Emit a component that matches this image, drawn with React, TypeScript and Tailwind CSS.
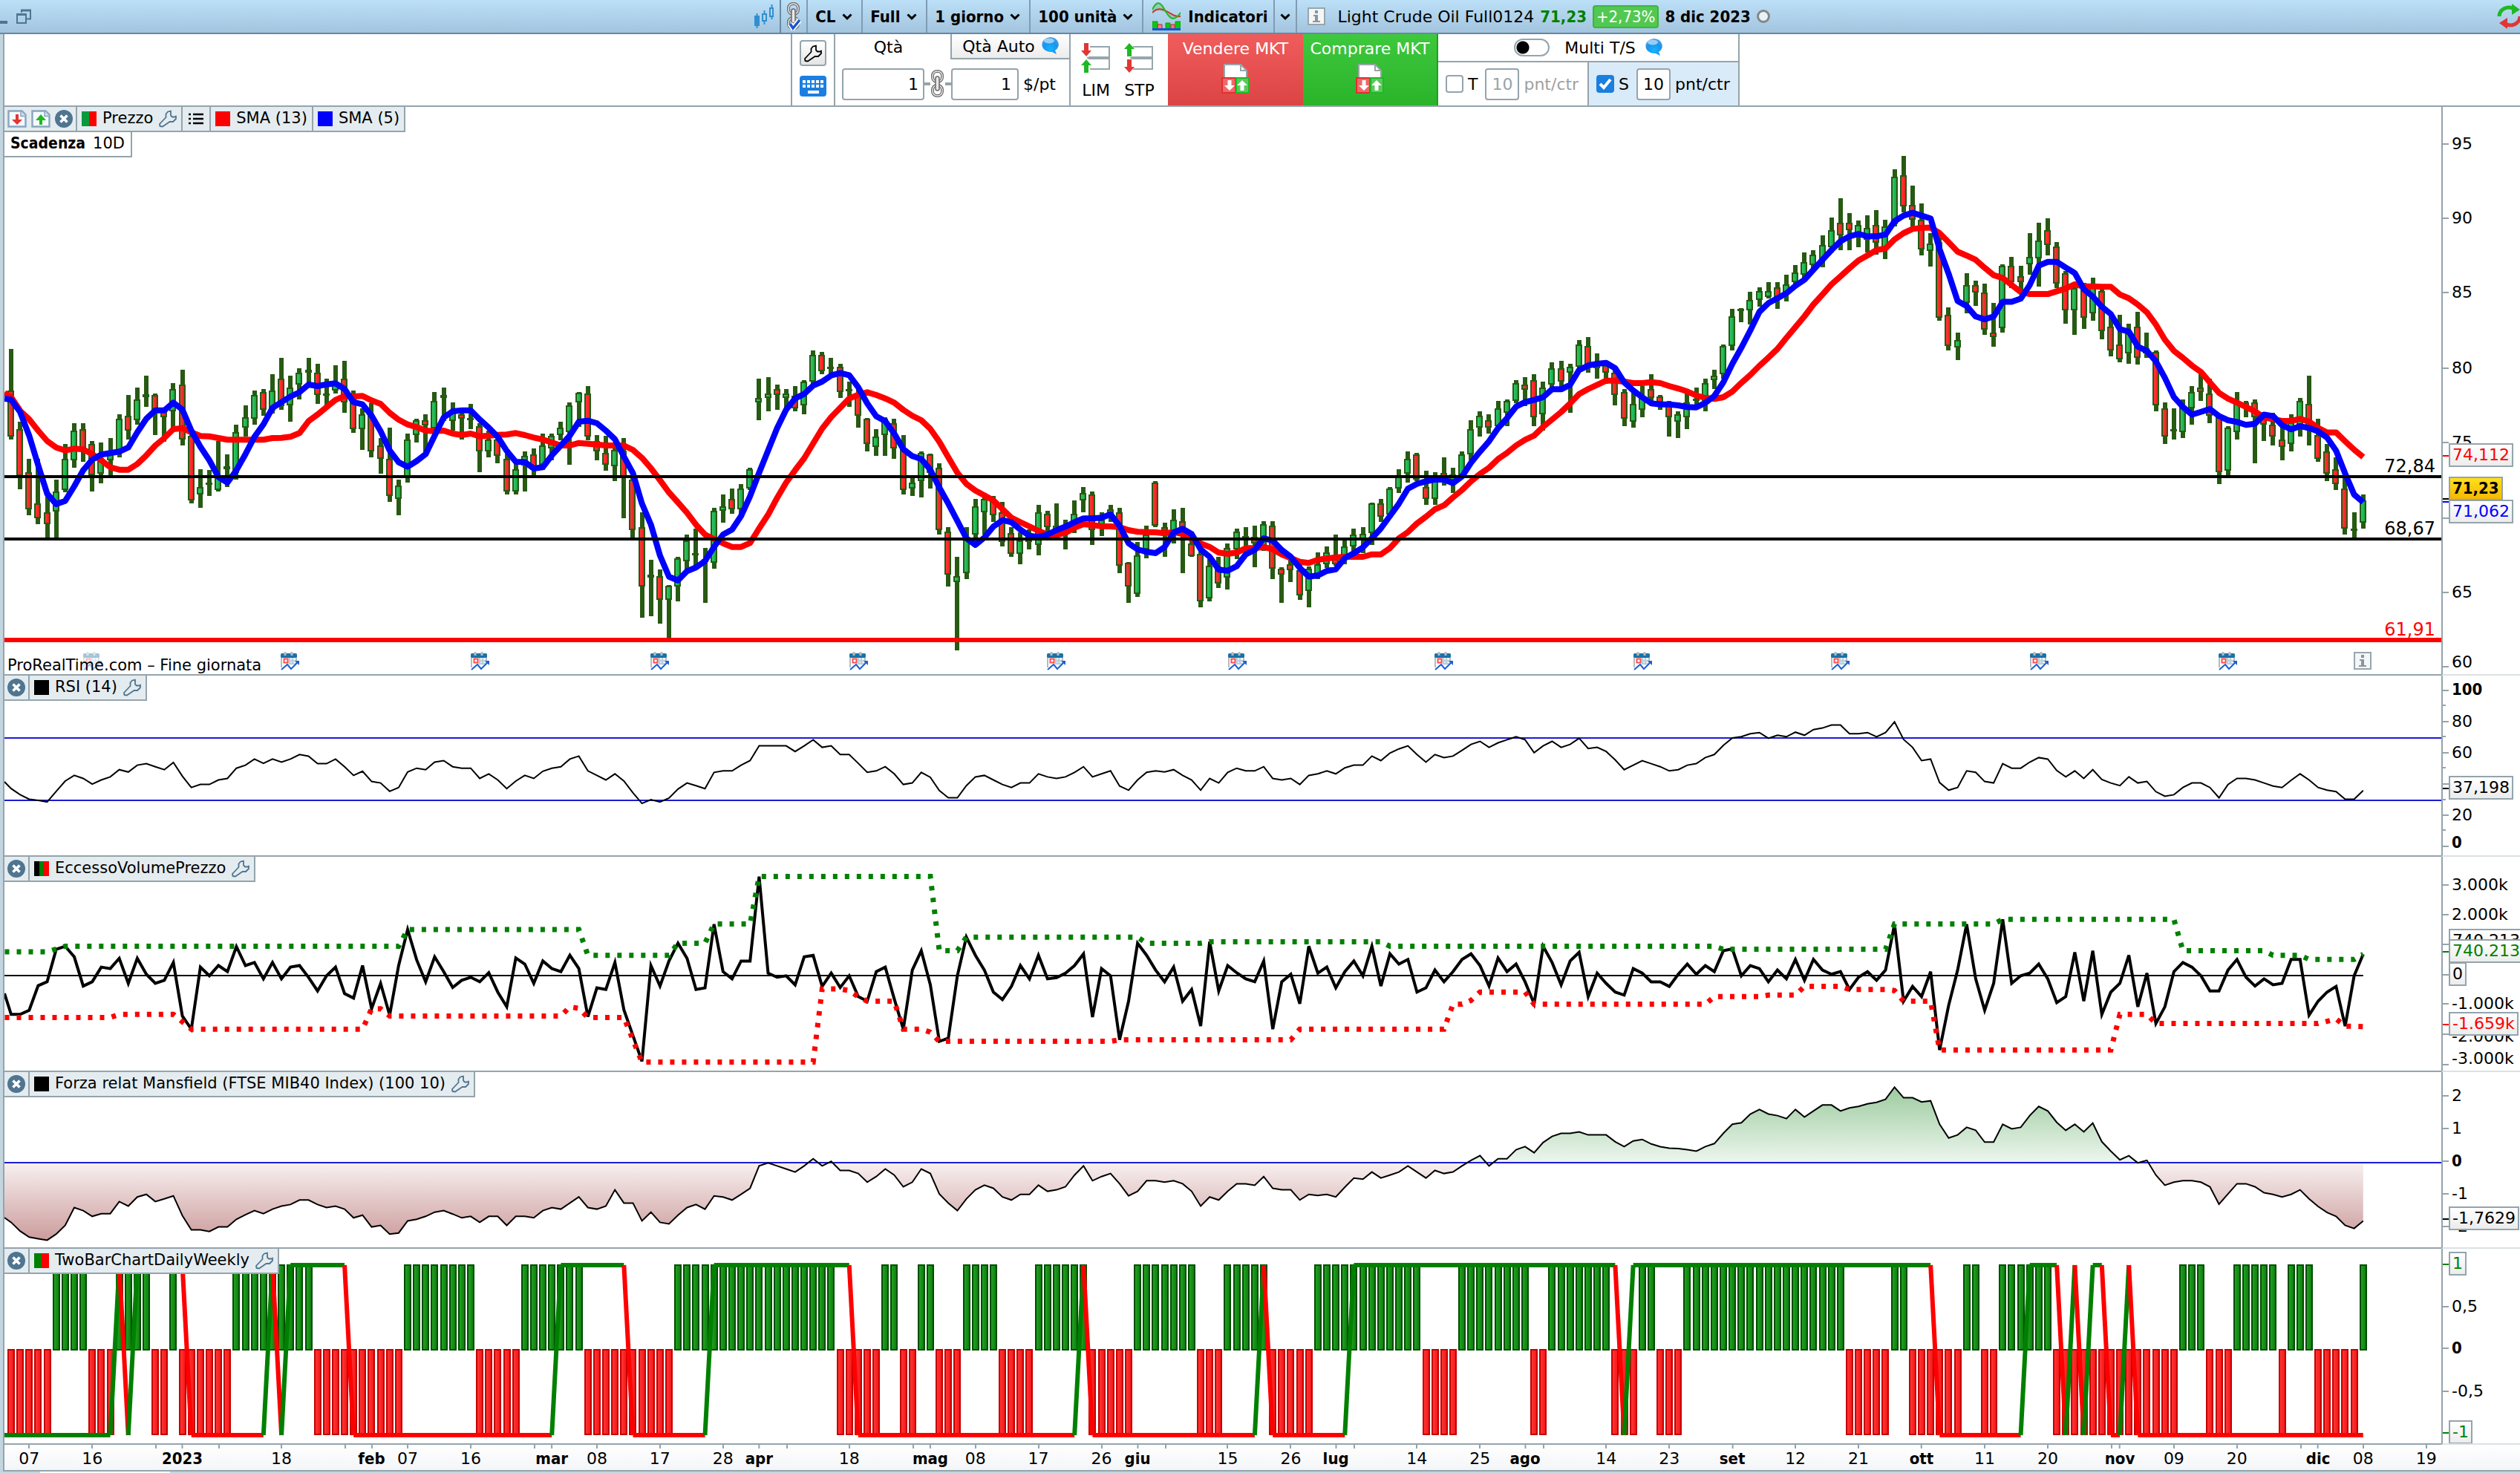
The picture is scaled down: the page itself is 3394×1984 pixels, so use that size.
import type { ReactNode } from "react";

type Mark = { at: number; text?: string; bold?: boolean; tick?: number | null; minor?: boolean };
type Tag = { at: number; text: string; className: string; tick?: string; tickAt?: number };

const PLOT_WIDTH = 3282;
const FIRST_BAR = 9;
const BAR_STEP = 12.137;

const barX = (i: number) => FIRST_BAR + BAR_STEP * i;
const pct = (value: number, total: number) => `${(value / total) * 100}%`;
const nums = (s: string) => s.trim().split(/[\s,]+/).map(Number);
const block = (base: number, step: number, s: string) => nums(s).map((n) => base + n / step);
const line = (ys: number[], first?: number) =>
  (first === undefined ? "" : `0,${first.toFixed(1)} `) +
  ys.map((y, i) => `${barX(i).toFixed(1)},${y.toFixed(1)}`).join(" ");

// Sessions: direction + high,top,bottom,low. Every block has its own base and step.
const candleBlocks: [number, number, string][] = [
  [276, 3, `
    r150,318,505,515 r445,474,664,718 r595,648,798,822 r595,773,833,857 r740,810,857,912 g678,726,808,912
    g535,594,720,730 g450,480,600,630 r450,474,560,605 r522,534,660,725 g528,590,655,694 g510,560,600,660
    g414,432,560,587 r336,420,480,515 g306,354,438,455 g258,333,345,383 r330,336,395,497 r390,400,425,525
    g288,312,402,470 r234,294,516,539 r480,500,762,773 g636,708,738,791 r640,690,700,743 g522,670,720,725
    g576,624,636,707 g456,486,650,677 g378,426,467,505 g318,336,432,455 r312,324,396,419 g252,318,400,412
    r186,270,380,395 g258,306,377,443 g228,246,295,353 r186,234,245,290 r210,246,335,371 g270,330,336,383
    g216,285,318,330 r198,270,366,407 r318,350,474,490 g390,413,474,557 r370,410,564,587 r510,540,595,653
    r468,594,744,767 g678,702,756,822 g492,516,672,689 g432,438,498,527 r414,438,460,570 g324,360,470,480
    g306,337,348,440 g366,400,440,480 r400,414,432,515 g372,430,438,473 r450,462,564,647 g480,516,564,587
    r500,516,582,611 r570,594,726,738 g600,636,726,738 g564,582,620,725 r552,576,640,665 g492,540,618,640
    g492,500,552,600 g444,468,498,520 g366,378,486,617 g324,328,366,465 r300,330,504,520 r498,522,564,600
    r500,570,618,641 g540,558,625,683 r510,560,672,833 r640,678,882,912 r810,870,1110,1235 g1002,1062,1075,1229
    r1040,1068,1164,1259 g1104,1108,1164,1317 g990,996,1110,1169 g900,924,1008,1050 g877,975,985,1040
    g954,1000,1010,1175 g792,804,1014,1037 g738,786,804,851 r714,756,798,815 g696,714,798,815 g630,636,714,720
    g270,348,366,437 g264,330,348,402 r294,312,336,395 g312,330,348,395 r300,340,390,402 g276,282,378,413
    g156,174,282,300 r162,174,240,251 g186,222,228,250 r210,222,324,347 g282,312,318,383 r315,330,420,467
    r430,432,534,563 g474,504,546,581 g426,432,498,581 r432,450,552,593 r498,550,720,738 g660,690,714,743
    g564,570,684,749 r573,576,650,713 r612,630,882,900 r870,888,1062,1109 g990,1068,1092,1367 g870,910,1056,1079
    g756,786,900,930 g740,756,810,900 r744,760,822,850 r768,810,930,947 r870,894,978,989 g890,924,978,1019
    r880,900,930,959 g780,810,942,983 r804,816,870,890 r774,864,880,910 g840,870,880,959 g762,816,860,893
    g708,732,762,809 r726,738,882,941 g810,840,860,905 r780,798,815,850 r792,810,1026,1055 r1010,1014,1110,1175
    g930,984,1140,1151 g864,900,960,995 r684,690,864,870 r852,870,885,989 g798,840,885,935 r792,846,880,1055
    r888,936,986,989 r960,978,1170,1193 g1000,1026,1158,1169 r990,1030,1098,1115 g936,954,1074,1121
    g876,888,960,1000 r870,905,915,960 r864,910,935,1031 g846,858,960,965`],
  [256, 3, `
    r906,924,1098,1139 r1092,1098,1122,1235 r1060,1080,1104,1151 r1080,1104,1206,1223 g1090,1098,1188,1253
    g1032,1080,1130,1139 g1008,1032,1080,1095 r960,1060,1080,1085 g985,1008,1060,1079 g936,960,1008,1030
    g930,957,985,1035 g832,834,955,1001 r816,834,888,910 g768,774,880,893 g696,720,774,791 g624,654,714,749
    r630,636,738,745 r702,768,816,839 g708,740,816,839 r648,712,730,761 g690,718,740,791 g624,636,720,730
    g498,534,636,660 g462,480,528,563 r474,498,528,551 g420,450,522,530 g414,420,468,521 g336,348,420,430
    r324,354,374,440 r312,336,486,521 g342,366,474,539 g264,288,354,370 r258,288,342,370 g270,282,306,467
    g174,192,282,300 r162,198,275,305 g228,270,288,329 r258,275,306,350 r295,306,396,437 r372,384,492,521
    g380,432,504,527 g360,400,456,486 r312,372,408,430 r396,402,425,455 r420,430,486,563 g462,474,504,570
    g390,426,486,533 g366,410,420,450 g330,348,420,461 g294,318,336,371 g192,198,312,330 g48,78,198,215
    g45,48,54,101 g-20,12,54,110 g-40,-24,12,40 g-60,-25,0,5 r-60,-40,0,47 g-90,-50,-10,17 g-130,-100,-60,-40
    g-180,-140,-90,-70 g-190,-170,-130,-110 g-250,-210,-150,-120 g-320,-270,-200,-180 r-400,-300,-250,-190
    r-340,-300,-270,-190 g-310,-290,-250,-200 g-330,-280,-230,-180 r-350,-290,-220,-170`],
  [36, 2.119, `
    g245,265,330,358 g102,123,258,265 r64,119,208,224 r148,203,246,264 r199,246,331,347 g285,313,335,380
    r295,310,526,533 r496,517,606,618 g568,589,610,647 g398,432,483,512 r420,432,454,491 r428,453,560,575
    r483,568,581,609 g373,377,555,567 r352,377,423,440 r377,407,424,445 g284,352,373,402 g254,305,356,436
    r242,275,318,347 r309,322,428,440 r393,398,504,542 g430,440,504,575 r425,440,526,558 g411,428,513,533
    r440,449,564,588 r510,551,619,635 r517,602,644,652 g542,570,627,656 r509,551,640,660 g568,612,628,640
    r618,623,776,792 r767,784,864,886 g784,843,849,873 g759,780,852,868 g720,738,784,830 r685,725,738,763
    r700,742,805,826 r800,810,966,1000 g835,839,962,975 g737,770,852,873 g763,767,780,809 r758,767,810,941
    r795,805,831,877 r797,830,865,890 r840,873,894,932 g800,825,886,907 g754,763,830,864 r690,771,848,890
    r814,860,928,937 r886,907,971,992 r924,958,1000,1017 r980,1013,1127,1144 g1081,1127,1132,1153
    g1030,1047,1110,1127`],
];

const candles = candleBlocks.flatMap(([base, step, text]) =>
  text.trim().split(/\s+/).map((c) => {
    const [high, top, bottom, low] = block(base, step, c.slice(1)).map(Math.round);
    return { up: c[0] === "g", high, top, bottom, low };
  }),
);

const sma13 = [
  ...block(276, 3, `345 400 434 480 522 548 560 553 556 575 600 628 638 638 615 580 540 510 474 470 487 502 503 510
    517 517 517 517 517 510 509 505 490 442 415 385 356 340 342 340 358 372 408 436 455 466 480 482 480 492 498 492
    503 500 497 496 490 498 508 516 528 540 540 530 533 536 540 540 540 558 590 632 680 730 770 812 860 900 918 935
    950 950 934 875 820 752 690 640 592 532 472 425 388 350 335 325 336 350 367 396 420 438 473 525 588 650 695 722
    742 762 797 832 850 867 885 900 902 893 872 858 862 866 867 870 882 889 890 891 895 890 898 918 936 950 973 978
    973 955 955 950`),
  ...block(256, 3, `1020 1040 1055 1070 1075 1062 1057 1052 1050 1050 1050 1040 1040 1015 975 950 915 888 858 842
    810 780 745 715 690 655 630 600 577 560 525 495 465 430 392 372 355 338 338 342 348 348 344 348 360 370 382 398
    408 412 405 382 347 315 278 245 210 165 122 78 30 -10 -51 -83 -116 -148 -168 -190`),
  ...block(36, 2.119, `328 302 284 272 269 268 284 310 337 348 360 383 404 412 432 452 458 458 458 450 442 430 436
    436 437 437 459 470 488 510 545 588 620 640 662 680 710 740 756 768 780 793 810 815 820 820 814 822 840 853 853
    878 902 923`),
];

const sma5 = [
  ...block(276, 3, `355 405 500 620 735 777 764 705 640 597 577 571 565 548 487 432 398 398 367 395 480 545 600 668
    690 640 575 505 455 388 365 342 325 294 300 293 289 312 365 374 420 482 560 608 626 603 575 500 427 402 398 398
    435 468 505 562 606 607 633 628 580 540 500 444 440 450 480 515 585 652 775 860 985 1070 1085 1048 1033 1007 950
    900 880 825 745 650 560 470 395 350 332 298 282 257 247 256 305 370 422 442 492 555 583 595 638 710 775 845 915
    942 912 868 842 850 880 905 910 900 882 868 850 835 835 832 818 865 935 960 970 975 950 892 877 898 960 990 1042
    1046 1028 980 962 915`),
  ...block(256, 3, `985 1022 1050 1095 1130 1125 1107 1100 1055 1035 1012 975 935 885 835 775 755 745 738 738 752
    725 670 625 583 530 490 443 425 416 405 373 373 355 295 277 270 266 288 345 378 405 430 434 434 438 445 446 428
    400 345 270 205 135 60 25 5 -15 -45 -70 -110 -150 -190 -225 -245 -255 -245 -245`),
  ...block(36, 2.119, `288 250 234 226 234 242 330 400 478 492 522 530 522 480 480 471 432 377 366 366 382 398 444
    465 494 515 558 565 608 620 650 697 752 780 802 794 786 806 818 823 831 828 802 806 832 844 835 840 850 868 905
    970 1030 1052`),
];

const rsi = block(-10, 1.96, `318 334 346 349 353 325 298 283 291 306 295 287 268 274 256 252 260 268 249 285 315 307
  307 295 291 264 256 240 251 240 248 240 228 232 252 252 240 260 283 272 299 303 325 315 274 264 268 248 244 260
  264 264 291 279 295 318 298 283 291 272 264 260 240 232 271 283 295 279 298 329 357 347 353 343 319 303 310 318
  275 271 271 256 244 205 205 205 205 220 205 189 209 205 228 228 251 275 271 260 279 307 303 275 288 323 342 342
  310 287 283 295 307 315 303 303 279 287 291 287 275 260 287 279 271 311 322 295 275 271 274 268 283 295 322 291
  303 275 264 271 271 260 291 295 291 307 283 279 271 279 263 256 256 232 244 224 213 205 228 248 228 236 232 217
  201 193 209 197 189 181 189 223 205 193 209 201 185 212 209 220 242 268 256 244 252 260 271 268 256 252 236 228
  204 184 181 173 170 185 177 181 169 177 162 158 150 150 173 173 170 181 170 142 188 209 244 240 302 322 315 271
  275 299 303 252 264 264 248 236 240 270 287 271 291 268 294 303 310 287 303 299 326 338 334 315 303 303 315 342
  307 291 291 295 303 311 315 296 279 295 315 322 326 346 346 323`);

const excess = block(-254, 1.96, `914 914 903 838 828 742 734 762 839 828 789 793 766 832 766 808 832 824 777 918 953
  789 812 785 801 735 785 777 820 777 820 789 785 816 852 812 789 859 871 785 899 832 916 785 690 770 828 762 801
  843 824 816 828 804 855 894 765 781 832 773 793 801 758 793 920 844 848 777 902 970 1038 785 839 773 726 766 848
  844 676 801 820 773 773 550 805 816 812 836 762 758 840 805 843 812 867 879 801 789 873 953 797 746 836 985 977
  812 710 758 797 855 875 840 785 820 758 820 817 805 785 754 921 793 812 981 879 726 758 797 828 789 879 848 945
  722 852 785 804 820 828 773 953 828 808 886 734 805 789 844 801 773 812 734 839 754 781 769 855 844 797 828 801
  769 754 785 839 765 801 781 828 886 734 777 836 773 750 867 805 832 855 863 793 805 828 828 840 808 781 808 785
  801 746 741 812 785 793 828 797 820 769 824 769 797 808 801 848 816 801 824 797 676 879 840 867 801 1008 890 797
  676 820 903 832 663 832 812 805 781 820 883 867 750 879 746 914 855 832 758 894 805 938 894 801 777 789 812 852
  852 797 769 816 839 820 836 832 769 769 916 879 855 840 945 812 755`);

const mansfield = block(-544, 1.96, `1463 1486 1502 1506 1510 1494 1471 1424 1432 1447 1440 1440 1408 1420 1396 1389
  1408 1401 1393 1445 1483 1483 1487 1475 1475 1455 1443 1432 1440 1428 1420 1416 1404 1404 1416 1424 1420 1428
  1451 1444 1475 1471 1494 1491 1459 1455 1447 1436 1432 1441 1451 1447 1463 1447 1447 1471 1447 1447 1451 1432
  1424 1428 1412 1396 1424 1428 1420 1377 1412 1412 1459 1436 1463 1467 1444 1424 1416 1428 1393 1396 1404 1389
  1373 1314 1306 1314 1322 1330 1314 1295 1314 1302 1326 1326 1334 1357 1342 1322 1338 1369 1357 1322 1334 1388
  1412 1432 1401 1377 1365 1373 1396 1404 1389 1389 1365 1381 1377 1369 1338 1314 1353 1342 1334 1361 1393 1381
  1353 1353 1357 1353 1361 1381 1420 1396 1404 1381 1361 1361 1365 1342 1373 1377 1377 1404 1389 1392 1389 1396
  1370 1346 1349 1330 1346 1338 1330 1314 1330 1346 1326 1334 1330 1314 1299 1287 1314 1295 1295 1271 1263 1279
  1252 1236 1228 1228 1224 1232 1232 1232 1250 1263 1248 1244 1256 1263 1267 1268 1271 1275 1263 1255 1228 1204
  1200 1177 1165 1177 1181 1189 1165 1185 1169 1153 1153 1169 1161 1157 1150 1146 1138 1106 1134 1134 1145 1142
  1204 1240 1232 1212 1220 1251 1251 1204 1216 1212 1181 1157 1169 1199 1220 1204 1224 1201 1250 1275 1298 1287
  1306 1299 1338 1365 1357 1353 1353 1357 1369 1415 1388 1361 1361 1369 1385 1389 1396 1389 1377 1401 1421 1437
  1447 1471 1479 1459`);

// index:level pairs of the two dotted channel lines
const steps = (s: string) =>
  s.trim().split(/\s+/).map((p) => {
    const [i, y] = p.split(":").map(Number);
    return `${barX(i).toFixed(1)},${(y / 1.96 - 254).toFixed(1)}`;
  }).join(" ");

const upperChannel = steps(`-0.7:749 4:749 6:734 43:734 44:690 63:690 64:758 73:758 74:726 77:726 78:675 82:675 83:550
  102:550 103:746 105:746 106:710 125:710 126:726 132:726 133:722 152:722 153:734 189:734 190:742 208:742 209:675
  220:675 221:663 240:663 241:746 250:746 251:758 254:758 255:769 260:769 261:755`);
const lowerChannel = steps(`-0.7:922 11:922 12:914 18:914 20:953 39:953 40:899 41:899 42:918 61:918 62:894 63:898
  64:922 68:922 70:1040 89:1040 90:847 92:847 93:851 94:867 95:879 98:879 99:953 101:953 102:961 103:985 122:985
  123:981 142:981 143:953 159:953 160:887 161:887 162:877 163:855 168:855 169:887 188:887 189:867 194:867 195:863
  198:863 199:840 203:840 204:848 208:848 209:851 210:879 213:879 214:1008 233:1008 234:914 237:914 238:938 256:938
  258:926 259:945 261:946`);

// run lengths of the daily bars, starting with a negative run
const dailyRuns = nums(`5 4 3 4 2 1 6 9 10 8 5 7 10 18 5 2 2 2 3 4 4 6 5 7 3 5 5 12 4 8 2 7 3 2 3 18 5 2 6 2 2 6 14 3
  3 5 1 3 5 1`);
const weeklyTurns = nums(`11 12 13 14 19 20 28 29 30 31 37 38 60 61 68 69 77 78 93 94 118 119 120 138 139 140 148 149
  178 179 180 213 214 223 224 227 228 229 230 231 232 233 234 235 236 261`);
const weeklyUp = new Set([12, 14, 19, 29, 31, 37, 61, 68, 78, 93, 119, 139, 149, 178, 180, 213, 224, 227, 229, 231, 232, 235]);

const dailyBars = (() => {
  const out: boolean[] = [];
  dailyRuns.forEach((n, k) => {
    for (let j = 0; j < n; j++) out.push(k % 2 === 1);
  });
  return out;
})();

const weeklySegments = (() => {
  const level = (i: number) => (weeklyUp.has(i) ? 22 : 251);
  const out = [{ x1: 0, y1: 251, x2: barX(11), y2: 251, up: true }];
  for (let k = 1; k < weeklyTurns.length; k++) {
    const a = weeklyTurns[k - 1];
    const b = weeklyTurns[k];
    out.push({ x1: barX(a), y1: level(a), x2: barX(b), y2: level(b), up: weeklyUp.has(b) });
  }
  return out;
})();

const eventMarks = [385, 641, 883, 1151, 1417, 1661, 1939, 2207, 2473, 2741, 2995];

const dates: [number, string, boolean?][] = [
  [2, "07"], [9, "16"], [19, "2023", true], [30, "18"], [40, "feb", true], [44, "07"], [51, "16"], [60, "mar", true],
  [65, "08"], [72, "17"], [79, "28"], [83, "apr", true], [93, "18"], [102, "mag", true], [107, "08"], [114, "17"],
  [121, "26"], [125, "giu", true], [135, "15"], [142, "26"], [147, "lug", true], [156, "14"], [163, "25"],
  [168, "ago", true], [177, "14"], [184, "23"], [191, "set", true], [198, "12"], [205, "21"], [212, "ott", true],
  [219, "11"], [226, "20"], [234, "nov", true], [240, "09"], [247, "20"], [256, "dic", true], [261, "08"], [268, "19"],
];
const extraTicks = [16, 23, 37, 58, 86, 100, 128, 149, 170, 233, 254];

const boldFont = "font-['DejaVu_Sans_Condensed','DejaVu_Sans',sans-serif] font-bold";
const tagBox = "border-[#94a4ac] bg-linear-to-b from-white to-[#ececec]";

/* ---------- icons ---------- */

function Wrench({ className = "size-6", stroke = "#4f7590" }: { className?: string; stroke?: string }) {
  return (
    <svg viewBox="0 0 24 24" className={className} fill="none" stroke={stroke} strokeWidth="1.8" strokeLinejoin="round">
      <path d="M12 2.500 16 1.500v6l2 2h4l1-1v3.500l-4 4h-4.500L5 22.500 1.500 22 1 19l8.500-9V5.500z" />
    </svg>
  );
}

function Chevron() {
  return (
    <svg viewBox="0 0 14 9" className="pointer-events-none h-[9px] w-3.5 shrink-0" fill="none" stroke="#000" strokeWidth="3">
      <path d="M1.500 1.500 7 6.800l5.500-5.300" />
    </svg>
  );
}

function CloseDot() {
  return (
    <svg viewBox="0 0 24 24" className="size-6">
      <circle cx="12" cy="12" r="12" fill="#4f7590" />
      <path d="M7.500 7.500l9 9M16.500 7.500l-9 9" stroke="#fff" strokeWidth="3.600" />
    </svg>
  );
}

function PageArrow({ up }: { up?: boolean }) {
  return (
    <svg viewBox="0 0 26 24" className="h-6 w-[26px]">
      <path d="M1.500 1.500h18l5 5v16h-23z" fill="#f7fafc" stroke="#8ba6c0" strokeWidth="2.500" />
      <path d="M18 1.500v7h7" fill="#cfdfea" stroke="#8ba6c0" strokeWidth="1.500" />
      {up ? (
        <path d="M13 6l7 8h-5v6h-4v-6H6z" fill="#1fb824" />
      ) : (
        <path d="M13 20l7-7h-5V6h-4v7H6z" fill="#e23535" />
      )}
    </svg>
  );
}

function Chain({ checked }: { checked?: boolean }) {
  return (
    <svg viewBox="0 0 20 38" className="h-[38px] w-5" fill="none">
      <rect x="3" y="2" width="13" height="14" rx="6" stroke="#6a6a6a" strokeWidth="4" />
      <rect x="3" y="2" width="13" height="14" rx="6" stroke="#e8e8e8" strokeWidth="1.500" />
      <rect x="3" y="21" width="13" height="14" rx="6" stroke="#6a6a6a" strokeWidth="4" />
      <rect x="3" y="21" width="13" height="14" rx="6" stroke="#e8e8e8" strokeWidth="1.500" />
      <rect x="7" y="9" width="5" height="19" rx="2.500" fill="#e8e8e8" stroke="#6a6a6a" strokeWidth="1.500" />
      {checked && (
        <>
          <path d="M5 29l4 6 9-11" stroke="#fff" strokeWidth="7" />
          <path d="M5 29l4 6 9-11" stroke="#1a55d0" strokeWidth="3.500" />
        </>
      )}
    </svg>
  );
}

function Balloon() {
  return (
    <svg viewBox="0 0 24 24" className="size-6">
      <defs>
        <radialGradient id="balloon" cx="0.5" cy="0.7" r="0.7">
          <stop offset="0" stopColor="#14b4ff" />
          <stop offset="0.6" stopColor="#1a94ee" />
          <stop offset="1" stopColor="#4f9fe0" />
        </radialGradient>
      </defs>
      <path d="M12 0a12 10 0 0 1 7 18l2 5-6-3A12 10 0 1 1 12 0z" fill="url(#balloon)" />
      <ellipse cx="11" cy="5" rx="7" ry="3.500" fill="#c5e6fb" opacity=".7" />
    </svg>
  );
}

function OrderSheet() {
  return (
    <svg viewBox="0 0 38 40" className="h-10 w-[38px]">
      <path d="M4 1h22l8 8v11H4z" fill="#fff" stroke="#9aa5a8" strokeWidth="2" />
      <path d="M26 1v8h8" fill="none" stroke="#9aa5a8" strokeWidth="2" />
      <rect x="1" y="19" width="18" height="20" fill="#ec6a6a" stroke="#e03030" strokeWidth="2" />
      <rect x="20" y="19" width="17" height="20" fill="#5cc85c" stroke="#1fb824" strokeWidth="2" />
      <path d="M11 36l-7-7h4.500v-7h5v7H18zM28 22l7 7h-4.500v7h-5v-7H21z" fill="#fff" />
    </svg>
  );
}

function LimitIcon({ stop }: { stop?: boolean }) {
  const top = stop ? "#1fb824" : "#e23535";
  const bottom = stop ? "#e23535" : "#1fb824";
  return (
    <svg viewBox="0 0 40 40" className="size-10">
      <path d="M12 5h26v30H12M8 20h30" fill="none" stroke="#97a6ac" strokeWidth="2" />
      <path d="M10 20h28" stroke="#97a6ac" strokeWidth="4" />
      {stop ? (
        <path d="M7 0l7 8H10v10H4V8H0z" fill={top} />
      ) : (
        <path d="M7 18l7-8H10V0H4v10H0z" fill={top} />
      )}
      {stop ? (
        <path d="M7 40l7-8H10V22H4v10H0z" fill={bottom} />
      ) : (
        <path d="M7 22l7 8H10v10H4V30H0z" fill={bottom} />
      )}
    </svg>
  );
}

function IndicatorIcon() {
  return (
    <svg viewBox="0 0 38 38" className="h-[38px] w-[38px]">
      <path d="M0 12C4-1 10-2 16 9s12 18 22 4v6c-8 1-14-3-20-5S6 8 0 16z" fill="#7fc79a" opacity=".7" />
      <path d="M0 14c6-6 12-6 19-2s12 8 19 7" fill="none" stroke="#d83030" strokeWidth="2" />
      <path d="M0 10C5-1 10-2 16 9s12 20 22 5" fill="none" stroke="#1fb824" strokeWidth="2" />
      <path d="M0 26h7v10H0zM18 28h6v8h-6zM31 26h7v10h-7z" fill="#0cc80c" stroke="#0a9a0a" />
      <path d="M7 30h6v6H7zM25 30h5v6h-5z" fill="#ff7a7a" stroke="#c02020" />
      <path d="M0 36.500h38" stroke="#1155d8" strokeWidth="3" />
    </svg>
  );
}

function InfoIcon() {
  return (
    <svg viewBox="0 0 24 24" className="size-6">
      <rect x="1" y="1" width="22" height="22" fill="#f4f6f7" stroke="#97a6ac" strokeWidth="2" />
      <rect x="10" y="4" width="4" height="4" fill="#87969c" />
      <path d="M8 10h6v8h3v2H7v-2h3v-6H8z" fill="#87969c" />
    </svg>
  );
}

function CalendarMark() {
  return (
    <svg viewBox="0 0 26 25" className="h-[25px] w-[26px]">
      <rect x="0" y="2" width="22" height="6" rx="1.500" fill="#1a72a8" />
      <path d="M1 8v13M21 8v8" stroke="#b4bcc2" strokeWidth="2" />
      <path d="M12 8v9M16 8v9M12 12h9M12 16h9" stroke="#b8d0de" strokeWidth="2.500" />
      <rect x="4.500" y="9.500" width="5" height="5" fill="none" stroke="#ff5050" strokeWidth="2" />
      <path d="M6 0v5M15 0v5" stroke="#b4bcc2" strokeWidth="3" />
      <path d="M1 24l8-7 5 6 10-10" fill="none" stroke="#1f5fd0" strokeWidth="2" />
      <path d="M19 12h6v6z" fill="#1f5fd0" />
    </svg>
  );
}

function SwapArrows() {
  return (
    <svg viewBox="0 0 38 36" className="h-9 w-[38px]" fill="none">
      <path d="M6 18A13 12 0 0 1 26 8" stroke="#1fb824" strokeWidth="5" />
      <path d="M23 1l11 8-11 7z" fill="#1fb824" />
      <path d="M34 18a13 12 0 0 1-20 10" stroke="#e23535" strokeWidth="5" />
      <path d="M17 20v15L6 27z" fill="#e23535" />
    </svg>
  );
}

/* ---------- toolbars ---------- */

function Picker({ label, value }: { label: string; value: string }) {
  return (
    <div className="flex items-center border-r-2 border-[#7f9cb3] pr-3 pl-2.5">
      <select aria-label={label} defaultValue={value} className={`h-full cursor-pointer appearance-none bg-transparent pr-2 text-[22px] outline-none ${boldFont}`}>
        <option>{value}</option>
      </select>
      <Chevron />
    </div>
  );
}

function TitleBar() {
  return (
    <header className="flex h-[46px] shrink-0 border-b-2 border-[#6688a0] bg-linear-to-b from-[#bce0f8] to-[#a3c4de]">
      <div className="flex flex-[1049] items-center justify-between">
        <div className="flex items-center gap-3">
          <button aria-label="Riduci" className="mt-4 h-1 w-2.5 bg-[#4f7590]" />
          <button aria-label="Ripristina">
            <svg viewBox="0 0 20 20" className="size-5" fill="none" stroke="#4f7590" strokeWidth="2">
              <path d="M7 5V1.500h12v12h-5M7 2.500h12" />
              <rect x="1" y="7" width="12" height="12" />
              <path d="M1 8h12" />
            </svg>
          </button>
        </div>
        <svg viewBox="0 0 26 32" className="mr-2 h-8 w-[26px]" fill="none" stroke="#2f8fd0" strokeWidth="2">
          <path d="M3.500 12v20M13.500 8v5M13.500 23v4M23.500 0v5M23.500 16v4" />
          <rect x="1" y="16" width="5" height="12" fill="#2f8fd0" />
          <rect x="11" y="13" width="5" height="9" />
          <rect x="21" y="5" width="4" height="11" />
        </svg>
      </div>
      <div className="flex border-l-2 border-[#6688a0]">
        <button aria-label="Collega" className="flex w-9 items-center justify-center border-r-2 border-[#7f9cb3]">
          <Chain checked />
        </button>
        <Picker label="Simbolo" value="CL" />
        <Picker label="Contratto" value="Full" />
        <Picker label="Intervallo" value="1 giorno" />
        <Picker label="Unità" value="100 unità" />
        <button className={`flex items-center gap-2.5 border-r-2 border-[#7f9cb3] pr-2 pl-3 text-[22px] ${boldFont}`}>
          <IndicatorIcon />
          Indicatori
        </button>
        <button aria-label="Altri indicatori" className="flex w-[30px] items-center justify-center border-r-2 border-[#7f9cb3]">
          <Chevron />
        </button>
        <div className="flex items-center gap-2 pl-3.5 text-[22px] whitespace-nowrap">
          <InfoIcon />
          <span className="pl-2">Light Crude Oil Full0124</span>
          <span className={`text-[#008000] ${boldFont}`}>71,23</span>
          <span className="h-[31px] rounded-sm border-2 border-[#3db53d] bg-[#52c852] px-[3px] font-['DejaVu_Sans_Condensed','DejaVu_Sans',sans-serif] leading-[27px] text-white">+2,73%</span>
          <span className={boldFont}>8 dic 2023</span>
          <span className="size-[18px] rounded-full border-[3px] border-[#868686] bg-white/70" />
        </div>
      </div>
      <div className="flex flex-[1009] items-center justify-end overflow-hidden">
        <button aria-label="Aggiorna" className="-mr-1">
          <SwapArrows />
        </button>
      </div>
    </header>
  );
}

function SideCell({ letter, checked }: { letter: string; checked?: boolean }) {
  return (
    <div className={checked ? "flex flex-1 items-center gap-1.5 bg-[#d9eaf8] px-2.5" : "flex flex-1 items-center gap-1.5 border-r-2 border-[#94a4ac] px-2.5"}>
      <label className="flex items-center gap-1.5">
        <span className="grid">
          <input
            type="checkbox"
            defaultChecked={checked}
            className="col-start-1 row-start-1 size-6 appearance-none rounded border-2 border-[#94a4ac] bg-white checked:border-[#1a7fe0] checked:bg-[#1a7fe0]"
          />
          {checked && (
            <svg viewBox="0 0 24 24" className="pointer-events-none col-start-1 row-start-1 size-6" fill="none" stroke="#fff" strokeWidth="4">
              <path d="M5 12l5 5L19 6" />
            </svg>
          )}
        </span>
        {letter}
      </label>
      <input
        aria-label={`Punti ${letter}`}
        defaultValue="10"
        className={checked ? "ml-1 h-[43px] w-[46px] rounded border-2 border-[#94a4ac] bg-white text-center" : "ml-1 h-[43px] w-[46px] rounded border-2 border-[#94a4ac] bg-white text-center text-[#94a4ac]"}
      />
      <span className={checked ? "" : "text-[#a0a0a0]"}>pnt/ctr</span>
    </div>
  );
}

function OrderBar() {
  return (
    <div className="flex h-[98px] shrink-0 justify-center border-b-2 border-[#94a4ac] bg-white pl-2 text-[22px]">
      <div className="flex w-[60px] flex-col items-center justify-between border-x-2 border-[#94a4ac] pt-2 pb-3">
        <button aria-label="Impostazioni" className="flex h-[35px] w-9 items-center justify-center rounded border-2 border-[#94a4ac] bg-linear-to-b from-white to-[#e4e4e4]">
          <Wrench stroke="#000" />
        </button>
        <button aria-label="Tastiera" className="h-7 w-9 rounded bg-[#1a7fe0]">
          <svg viewBox="0 0 36 28" className="h-7 w-9" stroke="#fff" strokeWidth="4">
            <path d="M4 8h28M4 14h28" strokeDasharray="4 2" />
            <path d="M11 22h15" />
          </svg>
        </button>
      </div>

      <div className="flex w-[315px] flex-col">
        <div className="flex h-[34px]">
          <button className="flex-1 pr-3">Qtà</button>
          <button className="flex w-[160px] items-center justify-center gap-2 border-b-2 border-l-2 border-[#94a4ac] bg-linear-to-b from-white to-[#ececec]">
            Qtà Auto
            <Balloon />
          </button>
        </div>
        <div className="flex flex-1 items-center pt-1 pl-[9px]">
          <input aria-label="Qtà" defaultValue="1" className="h-[43px] w-[111px] rounded border-2 border-[#94a4ac] px-1.5 text-right" />
          <span className="h-1 w-2 bg-[#94a4ac]" />
          <Chain />
          <span className="h-1 w-2 bg-[#94a4ac]" />
          <input aria-label="Qtà Auto" defaultValue="1" className="h-[43px] w-[91px] rounded border-2 border-[#94a4ac] px-2 text-right" />
          <span className="pl-1.5">$/pt</span>
        </div>
      </div>

      <div className="flex w-[133px] items-center justify-center gap-[18px] border-l-2 border-[#94a4ac] pr-1">
        <button className="flex flex-col items-center gap-2 pt-2 leading-8">
          <LimitIcon />
          LIM
        </button>
        <button className="flex flex-col items-center gap-2 pt-2 leading-8">
          <LimitIcon stop />
          STP
        </button>
      </div>

      <button className="flex w-[182px] flex-col items-center gap-1 bg-linear-to-b from-[#f05c5c] to-[#dc4444] pt-1 leading-8 text-white">
        Vendere MKT
        <OrderSheet />
      </button>
      <button className="flex w-[182px] flex-col items-center gap-1 border-r-2 border-[#1ea01e] bg-linear-to-b from-[#3ec83e] to-[#2ab42a] pt-1 leading-8 text-white">
        Comprare MKT
        <OrderSheet />
      </button>

      <div className="flex w-[406px] flex-col border-r-2 border-[#94a4ac]">
        <div className="flex h-[38px] items-center justify-center gap-3 border-b-2 border-[#94a4ac]">
          <label className="flex items-center gap-5">
            <input type="checkbox" role="switch" className="h-6 w-12 appearance-none rounded-full border-2 border-[#94a4ac] bg-[radial-gradient(circle_at_10px_10px,black_8px,transparent_9px)]" />
            Multi T/S
          </label>
          <Balloon />
        </div>
        <div className="flex flex-1">
          <SideCell letter="T" />
          <SideCell letter="S" checked />
        </div>
      </div>
    </div>
  );
}

/* ---------- panels ---------- */

function LegendCell({ colors, children, wrench }: { colors: string[]; children: ReactNode; wrench?: boolean }) {
  return (
    <div className="flex items-center gap-2 border-r-2 border-[#94a4ac] px-1.5">
      <span className="flex size-5">
        {colors.map((c) => (
          <span key={c} className="flex-1" style={{ background: c }} />
        ))}
      </span>
      <span>{children}</span>
      {wrench && (
        <button aria-label="Configura">
          <Wrench className="block size-6" />
        </button>
      )}
    </div>
  );
}

function LegendBar({ children, lead }: { children: ReactNode; lead?: ReactNode }) {
  return (
    <div className="relative flex h-[34px] w-fit border-b-2 border-[#94a4ac] bg-[#e4ecf0] text-[21px] whitespace-nowrap">
      <div className="flex items-center gap-1.5 border-r-2 border-[#94a4ac] px-1">
        {lead}
        <button aria-label="Chiudi">
          <CloseDot />
        </button>
      </div>
      {children}
    </div>
  );
}

function Scale({ height, marks, tags = [] }: { height: number; marks: Mark[]; tags?: Tag[] }) {
  return (
    <div className="relative w-[106px] shrink-0 overflow-hidden border-b-2 border-l-2 border-b-[#dbe1e4] border-l-[#94a4ac] text-[22px] leading-7">
      {marks.map((m, k) => (
        <div key={k}>
          {m.tick !== null && (
            <span className={m.minor ? "absolute left-0 h-0.5 w-1 bg-[#94a4ac]" : "absolute left-0 h-0.5 w-2 bg-[#94a4ac]"} style={{ top: pct((m.tick ?? m.at) - 1, height) }} />
          )}
          {m.text && (
            <span className={m.bold ? `absolute left-3 -translate-y-1/2 ${boldFont}` : "absolute left-3 -translate-y-1/2"} style={{ top: pct(m.at, height) }}>
              {m.text}
            </span>
          )}
        </div>
      ))}
      {tags.map((t, k) => (
        <div key={k}>
          {t.tick && <span className="absolute left-0 h-0.5 w-2" style={{ top: pct(t.tickAt ?? t.at, height), background: t.tick }} />}
          <span className={`absolute left-2 -translate-y-1/2 border-2 px-[3px] ${t.className}`} style={{ top: pct(t.at, height) }}>
            {t.text}
          </span>
        </div>
      ))}
    </div>
  );
}

function Plot({ height, children, overlay, legend }: { height: number; children: ReactNode; overlay?: ReactNode; legend: ReactNode }) {
  return (
    <div className="relative min-w-0 flex-1 border-b-2 border-[#94a4ac] bg-white">
      <svg viewBox={`0 0 ${PLOT_WIDTH} ${height}`} preserveAspectRatio="none" className="absolute inset-0 size-full">
        {children}
      </svg>
      {overlay}
      {legend}
    </div>
  );
}

function PricePanel() {
  const h = 764;
  const levels = [
    { y: 498, text: "72,84", color: "#000", w: 4 },
    { y: 582, text: "68,67", color: "#000", w: 4 },
    { y: 718, text: "61,91", color: "#f00", w: 6 },
  ];
  return (
    <section className="flex min-h-0 flex-[766]">
      <Plot
        height={h}
        overlay={
          <>
            {levels.map((l) => (
              <span key={l.text} className="absolute right-2 -translate-y-full text-[24px] leading-7" style={{ top: pct(l.y, h), color: l.color }}>
                {l.text}
              </span>
            ))}
            <span className="absolute -translate-x-1/2 opacity-40" style={{ left: pct(119, PLOT_WIDTH), top: pct(734, h) }}>
              <CalendarMark />
            </span>
            {eventMarks.map((x) => (
              <span key={x} className="absolute -translate-x-1/2" style={{ left: pct(x, PLOT_WIDTH), top: pct(734, h) }}>
                <CalendarMark />
              </span>
            ))}
            <span className="absolute -translate-x-1/2" style={{ left: pct(3176, PLOT_WIDTH), top: pct(734, h) }}>
              <InfoIcon />
            </span>
            <span className="absolute bottom-0 left-1 text-[21px] leading-6">ProRealTime.com – Fine giornata</span>
          </>
        }
        legend={
          <>
            <LegendBar
              lead={
                <>
                  <button aria-label="Sposta giù"><PageArrow /></button>
                  <button aria-label="Sposta su"><PageArrow up /></button>
                </>
              }
            >
              <LegendCell colors={["#0a9a3c", "#ff0000"]} wrench>Prezzo</LegendCell>
              <button aria-label="Elenco" className="flex items-center border-r-2 border-[#94a4ac] px-2">
                <svg viewBox="0 0 20 18" className="h-[18px] w-5" stroke="#000" strokeWidth="2.500">
                  <path d="M0 3h3M6 3h14M0 9h3M6 9h14M0 15h3M6 15h14" />
                </svg>
              </button>
              <LegendCell colors={["#ff0000"]}>SMA (13)</LegendCell>
              <LegendCell colors={["#0000ff"]}>SMA (5)</LegendCell>
            </LegendBar>
            <div className="relative flex h-[34px] w-fit items-center gap-2.5 border-r-2 border-b-2 border-[#94a4ac] bg-white px-2 text-[21px]">
              <span className={boldFont}>Scadenza</span>
              <span>10D</span>
            </div>
          </>
        }
      >
        <defs>
          <linearGradient id="candleUp">
            <stop offset="0" stopColor="#35d070" />
            <stop offset="1" stopColor="#12a03c" />
          </linearGradient>
          <linearGradient id="candleDown">
            <stop offset="0" stopColor="#ff4040" />
            <stop offset="1" stopColor="#f01818" />
          </linearGradient>
        </defs>
        {candles.map((c, i) => {
          const x = Math.round(barX(i));
          return (
            <g key={i}>
              <rect x={x - 3} y={c.high} width="6" height={c.low - c.high} fill="#275a12" />
              <rect x={x - 4} y={c.top + 1} width="7" height={Math.max(1, c.bottom - c.top - 2)} fill={c.up ? "url(#candleUp)" : "url(#candleDown)"} stroke="#275a12" strokeWidth="2" />
            </g>
          );
        })}
        <polyline points={line(sma13, 385)} fill="none" stroke="#f00" strokeWidth="8" strokeLinejoin="round" />
        <polyline points={line(sma5, 393)} fill="none" stroke="#00f" strokeWidth="8" strokeLinejoin="round" />
        {levels.map((l) => (
          <line key={l.text} x1="0" x2={PLOT_WIDTH} y1={l.y} y2={l.y} stroke={l.color} strokeWidth={l.w} />
        ))}
      </Plot>
      <Scale
        height={h}
        marks={[
          { at: 50, text: "95" }, { at: 150, text: "90" }, { at: 250, text: "85" }, { at: 352, text: "80" },
          { at: 452, text: "75" }, { at: 554, text: "70" }, { at: 654, text: "65" }, { at: 748, tick: 754, text: "60" },
        ]}
        tags={[
          { at: 469, text: "74,112", className: `${tagBox} text-[#f00]`, tick: "#f00" },
          { at: 545, text: "71,062", className: `${tagBox} text-[#00f]`, tick: "#00f", tickAt: 531 },
          { at: 514, text: "71,23", className: `border-[#94a4ac] bg-linear-to-b from-[#ffe01a] to-[#f5b800] ${boldFont}`, tick: "#000", tickAt: 527 },
        ]}
      />
    </section>
  );
}

function RsiPanel() {
  return (
    <section className="flex min-h-0 flex-[244]">
      <Plot
        height={242}
        legend={<LegendBar><LegendCell colors={["#000000"]} wrench>RSI (14)</LegendCell></LegendBar>}
      >
        <path d={`M0 84H${PLOT_WIDTH}M0 168H${PLOT_WIDTH}`} stroke="#1c1cd2" strokeWidth="2" />
        <polyline points={line(rsi, 143)} fill="none" stroke="#000" strokeWidth="2" />
      </Plot>
      <Scale
        height={242}
        marks={[
          { at: 19, tick: 20, text: "100", bold: true }, { at: 40, minor: true }, { at: 62, text: "80" }, { at: 82, minor: true },
          { at: 104, text: "60" }, { at: 124, minor: true }, { at: 146 }, { at: 167, minor: true },
          { at: 188, text: "20" }, { at: 208, minor: true }, { at: 225, tick: 230, text: "0", bold: true },
        ]}
        tags={[{ at: 151, text: "37,198", className: tagBox, tick: "#000" }]}
      />
    </section>
  );
}

function ExcessPanel() {
  return (
    <section className="flex min-h-0 flex-[290]">
      <Plot
        height={288}
        legend={
          <LegendBar>
            <LegendCell colors={["#000000", "#008000", "#ff0000"]} wrench>EccessoVolumePrezzo</LegendCell>
          </LegendBar>
        }
      >
        <line x1="0" x2={barX(261)} y1="160" y2="160" stroke="#000" strokeWidth="2" />
        <polyline points={line(excess, 184)} fill="none" stroke="#000" strokeWidth="4" />
        <polyline points={upperChannel} fill="none" stroke="#008000" strokeWidth="7" strokeDasharray="6 10" />
        <polyline points={lowerChannel} fill="none" stroke="#f00" strokeWidth="7" strokeDasharray="6 10" />
      </Plot>
      <Scale
        height={288}
        marks={[
          { at: 38, text: "3.000k" }, { at: 78, text: "2.000k" }, { at: 118 }, { at: 198, text: "-1.000k" },
          { at: 242, tick: 239, text: "-2.000k" }, { at: 272, tick: 280, text: "-3.000k" },
        ]}
        tags={[
          { at: 158, text: "0", className: tagBox, tick: "#94a4ac" },
          { at: 113, text: "740.213", className: tagBox },
          { at: 127, text: "740.213", className: `${tagBox} text-[#008000]`, tick: "#008000" },
          { at: 225, text: "-1.659k", className: `${tagBox} text-[#f00]`, tick: "#f00" },
        ]}
      />
    </section>
  );
}

function MansfieldPanel() {
  const zero = 122;
  const area = `0,${zero} ${line(mansfield, 196)} ${barX(261)},${zero}`;
  return (
    <section className="flex min-h-0 flex-[238]">
      <Plot
        height={236}
        legend={
          <LegendBar>
            <LegendCell colors={["#000000"]} wrench>Forza relat Mansfield (FTSE MIB40 Index) (100 10)</LegendCell>
          </LegendBar>
        }
      >
        <defs>
          <linearGradient id="strong" gradientUnits="userSpaceOnUse" x1="0" x2="0" y1="20" y2={zero}>
            <stop offset="0" stopColor="#9ccb9e" />
            <stop offset="1" stopColor="#edf6ee" />
          </linearGradient>
          <linearGradient id="weak" gradientUnits="userSpaceOnUse" x1="0" x2="0" y1={zero} y2="226">
            <stop offset="0" stopColor="#f8f0f0" />
            <stop offset="1" stopColor="#cc9c9c" />
          </linearGradient>
          <clipPath id="above"><rect width={PLOT_WIDTH} height={zero} /></clipPath>
          <clipPath id="below"><rect y={zero} width={PLOT_WIDTH} height="114" /></clipPath>
        </defs>
        <polygon points={area} fill="url(#strong)" clipPath="url(#above)" />
        <polygon points={area} fill="url(#weak)" clipPath="url(#below)" />
        <line x1="0" x2={PLOT_WIDTH} y1={zero} y2={zero} stroke="#1c1cd2" strokeWidth="2" />
        <polyline points={line(mansfield, 196)} fill="none" stroke="#000" strokeWidth="2" />
      </Plot>
      <Scale
        height={236}
        marks={[
          { at: 32, text: "2" }, { at: 76, text: "1" }, { at: 120, text: "0", bold: true }, { at: 164, text: "-1" },
          { at: 208, text: "-2" },
        ]}
        tags={[{ at: 197, text: "-1,7629", className: tagBox, tick: "#000" }]}
      />
    </section>
  );
}

function TwoBarPanel() {
  return (
    <section className="flex min-h-0 flex-[264]">
      <Plot
        height={262}
        legend={
          <LegendBar>
            <LegendCell colors={["#008000", "#ff0000"]} wrench>TwoBarChartDailyWeekly</LegendCell>
          </LegendBar>
        }
      >
        <defs>
          <linearGradient id="barUp">
            <stop offset="0" stopColor="#23a823" />
            <stop offset="1" stopColor="#0d7a0d" />
          </linearGradient>
          <linearGradient id="barDown">
            <stop offset="0" stopColor="#ff3a3a" />
            <stop offset="1" stopColor="#f51414" />
          </linearGradient>
        </defs>
        {dailyBars.map((up, i) => (
          <rect key={i} x={Math.round(barX(i)) - 4} y={up ? 22 : 136} width="8" height="114" fill={up ? "url(#barUp)" : "url(#barDown)"} stroke={up ? "#004d00" : "#c40000"} strokeWidth="2" />
        ))}
        {weeklySegments.map((s, i) => (
          <line key={i} x1={s.x1} y1={s.y1} x2={s.x2} y2={s.y2} stroke={s.up ? "#008000" : "#f00"} strokeWidth="6" />
        ))}
      </Plot>
      <Scale
        height={262}
        marks={[{ at: 78, text: "0,5" }, { at: 134, text: "0", bold: true }, { at: 192, text: "-0,5" }]}
        tags={[
          { at: 20, text: "1", className: `${tagBox} text-[#008000]`, tick: "#008000" },
          { at: 247, text: "-1", className: `${tagBox} text-[#008000]`, tick: "#008000" },
        ]}
      />
    </section>
  );
}

function DateAxis() {
  return (
    <footer className="flex h-9 shrink-0 border-b-2 border-[#94a4ac] bg-linear-to-b from-white to-[#f4f5f8] text-[22px]">
      <div className="relative flex-1">
        {dates.map(([i, text, bold]) => (
          <span key={i} className="absolute flex -translate-x-1/2 flex-col items-center" style={{ left: pct(barX(i), PLOT_WIDTH) }}>
            <span className="h-[5px] w-0.5 bg-[#94a4ac]" />
            <span className={bold ? `leading-7 ${boldFont}` : "leading-7"}>{text}</span>
          </span>
        ))}
        {extraTicks.map((i) => (
          <span key={i} className="absolute h-[5px] w-0.5 bg-[#94a4ac]" style={{ left: pct(barX(i), PLOT_WIDTH) }} />
        ))}
      </div>
      <div className="w-[106px]" />
    </footer>
  );
}

export default function App() {
  return (
    <div className="flex h-screen flex-col overflow-hidden bg-[#c3d6e0] font-['DejaVu_Sans',sans-serif] text-black">
      <TitleBar />
      <main className="ml-1 flex min-h-0 flex-1 flex-col border-l-2 border-[#94a4ac] bg-white">
        <OrderBar />
        <PricePanel />
        <RsiPanel />
        <ExcessPanel />
        <MansfieldPanel />
        <TwoBarPanel />
        <DateAxis />
      </main>
      <div className="h-0.5 shrink-0 pl-[54px]">
        <div className="h-0.5 w-[175px] bg-white" />
      </div>
    </div>
  );
}
